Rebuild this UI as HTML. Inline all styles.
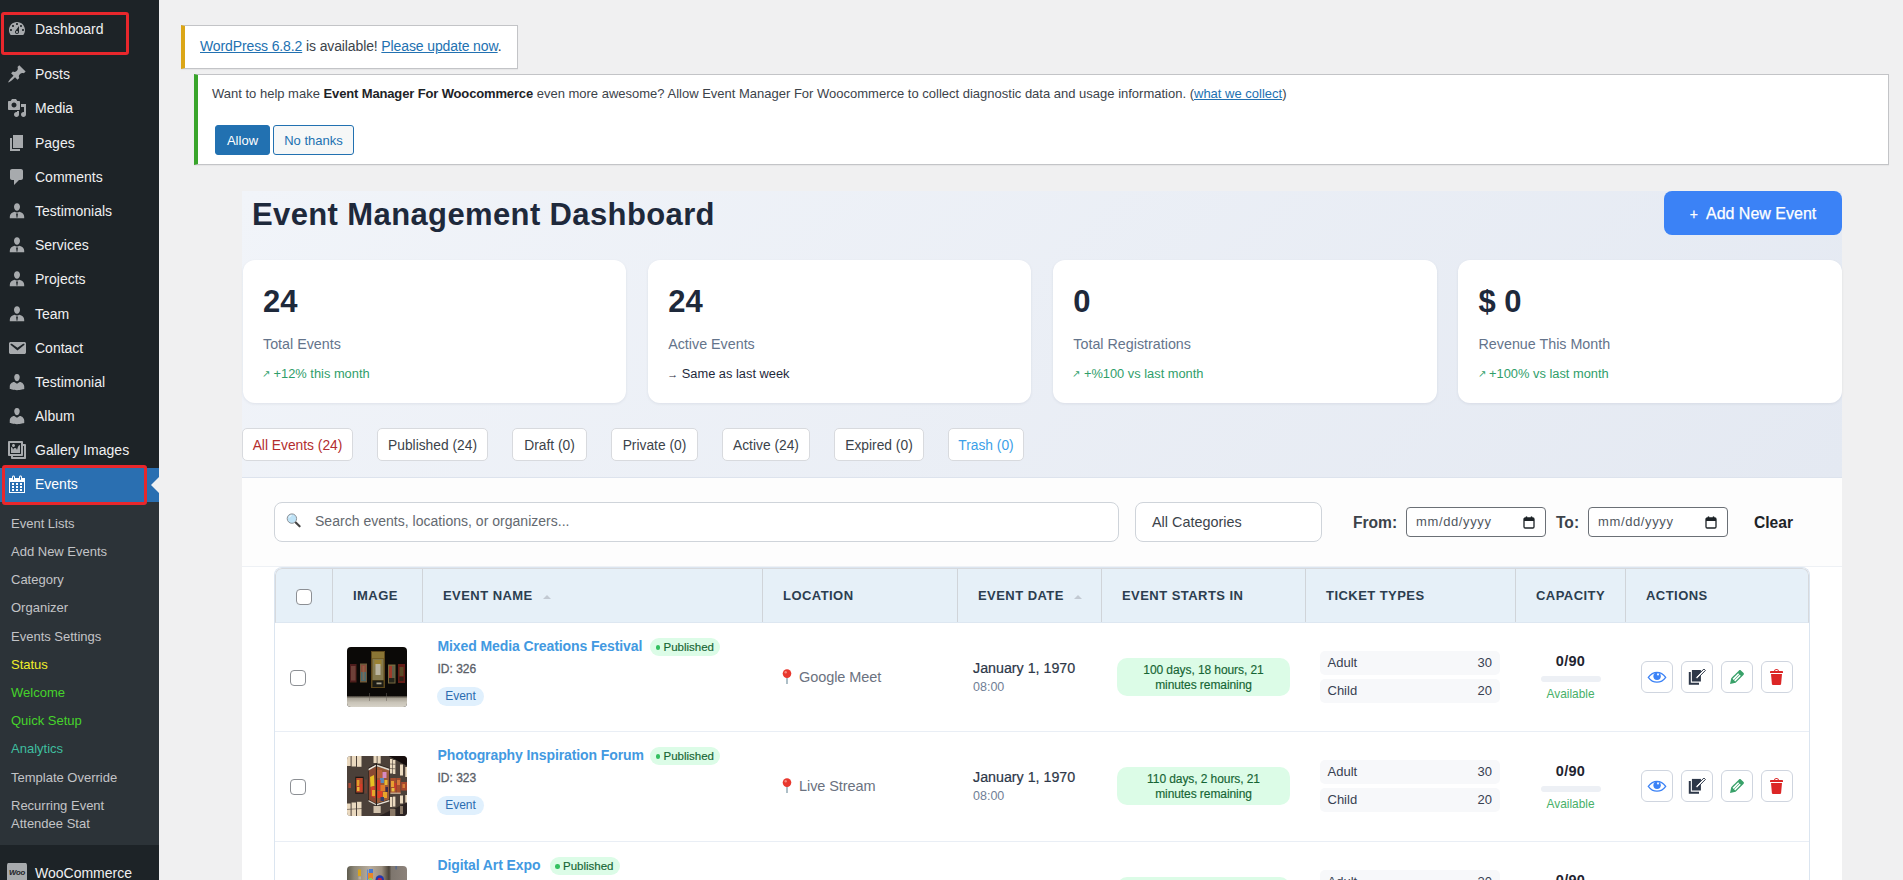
<!DOCTYPE html>
<html lang="en">
<head>
<meta charset="utf-8">
<title>Event Management Dashboard</title>
<style>
*{box-sizing:border-box;}
html,body{margin:0;padding:0;}
html{overflow:hidden;width:1903px;height:880px;}
body{width:1903px;height:880px;overflow:hidden;background:#f0f0f1;font-family:"Liberation Sans",sans-serif;font-size:13px;color:#3c434a;position:relative;}
a{color:#2271b1;text-decoration:underline;}
/* ---------- sidebar ---------- */
#menu{position:absolute;left:0;top:0;width:159px;height:880px;background:#1d2327;}
#menu .it{position:absolute;left:0;width:159px;height:34px;color:#f0f0f1;font-size:14px;line-height:34px;padding-left:35px;white-space:nowrap;}
#menu .it svg{position:absolute;left:7px;top:7px;width:20px;height:20px;fill:#a7aaad;}
#menu .it.cur{background:#2a6fb1;color:#fff;line-height:32px;}
#menu .it.cur svg{fill:#fff;top:6px;}
#menu .it.cur:after{content:"";position:absolute;right:0;top:9px;border:8px solid transparent;border-right-color:#f0f0f1;}
#sub{position:absolute;left:0;top:501.800px;width:159px;height:343.400px;background:#2c3338;}
#sub div{position:absolute;left:11px;margin-top:1px;font-size:13px;line-height:18px;color:#c3c4c7;white-space:nowrap;}
.redbox{position:absolute;border:3px solid #e8272c;border-radius:3px;}
/* ---------- notices ---------- */
#nag{position:absolute;left:181px;top:25px;width:337px;height:44px;background:#fff;border:1px solid #c3c4c7;border-left:4px solid #dba617;box-shadow:0 1px 1px rgba(0,0,0,.04);font-size:14px;line-height:19px;padding:11px 0 0 15px;white-space:nowrap;color:#3c434a;letter-spacing:-.12px;}
#notice{position:absolute;left:194px;top:74px;width:1695px;height:91px;background:#fff;border:1px solid #c3c4c7;border-left:4px solid #39a52b;box-shadow:0 1px 1px rgba(0,0,0,.04);}
#notice p{position:absolute;left:14px;top:9px;margin:0;font-size:13px;line-height:19px;white-space:nowrap;color:#3c434a;}
#notice b{color:#1d2327;letter-spacing:-.14px;}
.btn{position:absolute;top:50px;height:30px;border-radius:3px;font-size:13px;line-height:29px;text-align:center;border:1px solid #2271b1;}
.btn.p{left:17px;width:55px;background:#2271b1;color:#fff;}
.btn.s{left:75px;width:81px;background:#f6f7f7;color:#2271b1;}
/* ---------- panel ---------- */
#panel{position:absolute;left:242px;top:191px;width:1600px;height:287px;border-bottom:1px solid #dde3ed;background:linear-gradient(135deg,#f1f4f9 0%,#e4e9f2 100%);}
#title{position:absolute;left:10px;top:6px;margin:0;font-size:31px;letter-spacing:.38px;line-height:36px;font-weight:bold;color:#1e293b;white-space:nowrap;}
#addnew{-webkit-text-stroke:.25px #fff;position:absolute;left:1422px;top:0;width:178px;height:44px;border-radius:8px;background:#3b82f6;color:#fff;font-size:16px;line-height:46px;text-align:center;white-space:nowrap;}
.card{position:absolute;top:68.800px;width:383.700px;height:143.400px;background:#fff;border-radius:12px;box-shadow:0 1px 3px rgba(30,41,59,.08);}
.card .n{position:absolute;left:20.500px;top:24px;font-size:31px;line-height:36px;font-weight:bold;color:#1e293b;}
.card .l{position:absolute;left:20.500px;top:75px;font-size:14.300px;line-height:18px;color:#64748b;}
.card .t{position:absolute;left:19.500px;top:106px;font-size:12.850px;line-height:16px;color:#2f9e6a;white-space:nowrap;}
.card .ar{font-size:9.500px;display:inline-block;width:8px;vertical-align:1px;}
.card .t.k .ar{font-size:11px;width:11px;vertical-align:0;}
.card .t.k{color:#1e293b;}
.tab{position:absolute;top:237px;height:33px;background:#fff;border:1px solid #d8dade;border-radius:5px;font-size:13.800px;line-height:33px;text-align:center;color:#3c434a;white-space:nowrap;}
/* ---------- filters ---------- */
#filters{position:absolute;left:242px;top:478px;width:1600px;height:89px;background:#fdfdfd;border-bottom:1px solid #eef1f5;}
#search{position:absolute;left:32px;top:24px;width:845px;height:40px;border:1px solid #cfd4da;border-radius:8px;background:#fff;font-size:14px;line-height:36px;color:#646970;padding-left:40px;letter-spacing:.02px;}
#cat{position:absolute;left:893px;top:24px;width:187px;height:40px;border:1px solid #cfd4da;border-radius:8px;background:#fff;font-size:14.400px;line-height:38px;color:#3c434a;padding-left:16px;}
.flab{position:absolute;top:33px;font-size:15.600px;line-height:24px;font-weight:bold;color:#3c434a;}
.date{position:absolute;top:29px;width:140px;height:30px;border:1px solid #6b7076;border-radius:4px;background:#fff;font-size:13px;letter-spacing:.62px;line-height:28px;color:#50575e;padding-left:9px;}
.date svg{position:absolute;left:116px;top:8px;width:12px;height:13px;}
/* ---------- table ---------- */
#below{position:absolute;left:242px;top:567px;width:1600px;height:313px;background:#fff;}
#tbl{position:absolute;left:274px;top:567px;width:1536px;height:320px;border:1px solid #dbe5f0;border-bottom:0;border-radius:8px 8px 0 0;overflow:hidden;background:#fff;}
#thead{position:absolute;left:0;top:0;width:1534px;height:55px;background:#e6f0f8;border:1px solid #d6d9dd;border-bottom:1px solid #dde7f1;border-radius:7px 7px 0 0;}
.th{position:absolute;top:0;height:53px;border-left:1px solid #d0d4d9;font-size:13px;line-height:54px;font-weight:bold;letter-spacing:.45px;color:#2c3e50;white-space:nowrap;}
.row{position:absolute;left:0;width:100%;height:109px;border-bottom:1px solid #e9eef5;}
.cb{position:absolute;width:16px;height:16px;border:1px solid #8c8f94;border-radius:4px;background:#fff;}

.th span{margin-left:20px;}
.srt{display:inline-block;margin-left:10px;border:4px solid transparent;border-top:0;border-bottom:4px solid #c2c9d2;vertical-align:1px;}
.thumb{position:absolute;left:72px;width:60px;height:60px;border-radius:4px;}
.ttl{position:absolute;left:162.500px;top:13px;font-size:14px;letter-spacing:-.1px;line-height:20px;font-weight:bold;color:#4299e1;white-space:nowrap;overflow:visible;}
.pub{-webkit-text-stroke:.15px #166534;position:absolute;top:15px;width:70px;height:18px;border-radius:9px;background:#dcfce7;color:#166534;font-size:11.500px;line-height:18px;padding-left:13.500px;white-space:nowrap;}
.pub i{position:absolute;left:5.500px;top:7px;width:4.500px;height:4.500px;border-radius:50%;background:#34c060;}
.pid{position:absolute;left:162.500px;top:38px;font-size:12px;line-height:16px;color:#5a6068;-webkit-text-stroke:.3px #5a6068;}
.ev{position:absolute;left:162px;top:64px;width:47px;height:19px;border-radius:10px;background:#e0f0fd;color:#2b6cb0;font-size:12px;line-height:19px;text-align:center;}
.loc{position:absolute;left:507px;top:45px;height:18px;white-space:nowrap;font-size:14.500px;letter-spacing:-.08px;line-height:18px;color:#6b7280;}
.loc svg{position:absolute;left:0;top:0;}
.loc span{position:absolute;left:17px;top:0;}
.dt{-webkit-text-stroke:.2px #2d3748;position:absolute;left:698px;top:36px;font-size:14.250px;line-height:18px;color:#2d3748;white-space:nowrap;}
.tm{position:absolute;left:698px;top:56px;font-size:12.500px;line-height:16px;color:#718096;}
.cd{-webkit-text-stroke:.15px #166534;position:absolute;left:842px;top:35px;width:173px;height:38px;border-radius:10px;background:#dcfce7;color:#166534;font-size:12px;letter-spacing:-.08px;line-height:15px;text-align:center;padding-top:5px;}
.tk{position:absolute;left:1044.500px;width:180.500px;height:23.500px;border-radius:5px;background:#f7f8fa;font-size:13px;line-height:24px;color:#374151;}
.tk span{position:absolute;left:8px;}
.tk b{position:absolute;right:8px;font-weight:normal;}
.cap{position:absolute;left:1240.500px;top:29px;width:110px;text-align:center;font-size:14.500px;letter-spacing:.3px;line-height:18px;font-weight:bold;color:#1f2430;}
.bar{position:absolute;left:1266px;top:53px;width:60px;height:6px;border-radius:3px;background:#edf0f5;}
.av{position:absolute;left:1240.500px;top:63px;width:110px;text-align:center;font-size:11.900px;line-height:16px;color:#48b068;}
.ab{position:absolute;top:38px;width:32px;height:32px;border:1px solid #cfd5df;border-radius:6px;background:#fff;}
.ab svg{position:absolute;}
.r2 .cap,.r2 .bar,.r2 .av{margin-top:1px;}
</style>
</head>
<body>
<div id="menu">
<div class="it" style="top:12.0px"><svg viewBox="0 0 20 20"><path d="M3.76 16h12.48c1.1-1.37 1.76-3.11 1.76-5 0-4.42-3.58-8-8-8s-8 3.58-8 8c0 1.89.66 3.63 1.76 5zM10 4c.55 0 1 .45 1 1s-.45 1-1 1-1-.45-1-1 .45-1 1-1zM6 6c.55 0 1 .45 1 1s-.45 1-1 1-1-.45-1-1 .45-1 1-1zm8 0c.55 0 1 .45 1 1s-.45 1-1 1-1-.45-1-1 .45-1 1-1zm-5.37 5.55L12 7v6c0 1.1-.9 2-2 2s-2-.9-2-2c0-.57.24-1.08.63-1.45zM4 10c.55 0 1 .45 1 1s-.45 1-1 1-1-.45-1-1 .45-1 1-1zm12 0c.55 0 1 .45 1 1s-.45 1-1 1-1-.45-1-1 .45-1 1-1zm-5 3c0-.55-.45-1-1-1s-1 .45-1 1 .45 1 1 1 1-.45 1-1z"/></svg>Dashboard</div>
<div class="it" style="top:57.2px"><svg viewBox="0 0 20 20"><path d="M10.44 3.02l1.82-1.82 6.36 6.35-1.83 1.82c-1.05-.68-2.48-.57-3.41.36l-.75.75c-.92.93-1.04 2.35-.35 3.41l-1.83 1.82-2.41-2.41-2.8 2.79c-.42.42-3.38 2.71-3.8 2.29s1.86-3.39 2.28-3.81l2.79-2.79L4.1 9.36l1.83-1.82c1.05.69 2.48.57 3.4-.36l.75-.75c.93-.92 1.05-2.35.36-3.41z"/></svg>Posts</div>
<div class="it" style="top:91.4px"><svg viewBox="0 0 20 20"><path d="M13 11V4c0-.55-.45-1-1-1h-1.67L9 1H5L3.67 3H2c-.55 0-1 .45-1 1v7c0 .55.45 1 1 1h10c.55 0 1-.45 1-1zM7 4.5c1.38 0 2.5 1.12 2.5 2.5S8.38 9.5 7 9.5 4.5 8.38 4.5 7 5.62 4.5 7 4.5zM14 6h5v10.5c0 1.38-1.12 2.5-2.5 2.5S14 17.88 14 16.5s1.12-2.5 2.5-2.5c.17 0 .34.02.5.05V9h-3V6zm-4 8.05V13h2v3.5c0 1.38-1.12 2.5-2.5 2.5S7 17.88 7 16.5 8.12 14 9.5 14c.17 0 .34.02.5.05z"/></svg>Media</div>
<div class="it" style="top:125.6px"><svg viewBox="0 0 20 20"><path d="M6 15V2h10v13H6zm-1 1h8v2H3V5h2v11z"/></svg>Pages</div>
<div class="it" style="top:159.8px"><svg viewBox="0 0 20 20"><path d="M5 2h9c1.1 0 2 .9 2 2v7c0 1.1-.9 2-2 2h-2l-5 5v-5H5c-1.1 0-2-.9-2-2V4c0-1.1.9-2 2-2z"/></svg>Comments</div>
<div class="it" style="top:194.0px"><svg viewBox="0 0 20 20"><path d="M10 2.2c1.8 0 3 1.5 3 3.6 0 2.2-1.3 4-3 4s-3-1.800-3-4c0-2.100 1.200-3.600 3-3.600zM7.600 10.700c.7.500 1.500.800 2.400.800s1.700-.300 2.400-.800c2.900.700 4.800 2.500 4.800 5v1.500H2.800v-1.500c0-2.500 1.900-4.300 4.800-5zM10 12.100l-.9 1 .5 3.400.4.600.4-.600.5-3.400z" fill-rule="evenodd"/></svg>Testimonials</div>
<div class="it" style="top:228.2px"><svg viewBox="0 0 20 20"><path d="M10 2.2c1.8 0 3 1.5 3 3.6 0 2.2-1.3 4-3 4s-3-1.800-3-4c0-2.100 1.200-3.600 3-3.600zM7.600 10.700c.7.500 1.500.800 2.400.800s1.700-.300 2.400-.800c2.900.700 4.800 2.500 4.800 5v1.500H2.800v-1.500c0-2.500 1.900-4.300 4.800-5zM10 12.100l-.9 1 .5 3.400.4.600.4-.600.5-3.400z" fill-rule="evenodd"/></svg>Services</div>
<div class="it" style="top:262.4px"><svg viewBox="0 0 20 20"><path d="M10 2.2c1.8 0 3 1.5 3 3.6 0 2.2-1.3 4-3 4s-3-1.800-3-4c0-2.100 1.200-3.600 3-3.600zM7.600 10.700c.7.500 1.500.800 2.400.800s1.700-.300 2.400-.800c2.900.700 4.800 2.500 4.800 5v1.500H2.800v-1.500c0-2.500 1.900-4.300 4.800-5zM10 12.100l-.9 1 .5 3.400.4.600.4-.600.5-3.400z" fill-rule="evenodd"/></svg>Projects</div>
<div class="it" style="top:296.6px"><svg viewBox="0 0 20 20"><path d="M10 2.2c1.8 0 3 1.5 3 3.6 0 2.2-1.3 4-3 4s-3-1.800-3-4c0-2.100 1.200-3.600 3-3.600zM7.600 10.700c.7.500 1.500.800 2.400.800s1.700-.300 2.400-.800c2.900.700 4.800 2.500 4.800 5v1.500H2.800v-1.500c0-2.500 1.900-4.300 4.800-5zM10 12.100l-.9 1 .5 3.400.4.600.4-.600.5-3.400z" fill-rule="evenodd"/></svg>Team</div>
<div class="it" style="top:330.8px"><svg viewBox="0 0 20 20"><path d="M3.870 4h13.250C18.370 4 19 4.590 19 5.790v8.420c0 1.190-.630 1.790-1.880 1.790H3.870c-1.250 0-1.880-.600-1.880-1.790V5.790c0-1.200.630-1.790 1.880-1.790zm6.620 8.600l6.740-5.530c.240-.200.430-.660.130-1.070-.290-.410-.820-.420-1.170-.170l-5.700 3.860L4.800 5.830c-.350-.250-.880-.240-1.170.170-.300.410-.110.870.130 1.070z"/></svg>Contact</div>
<div class="it" style="top:365.0px"><svg viewBox="0 0 20 20"><path d="M10 9.250c-2.270 0-2.730-3.440-2.730-3.440C7 4.020 7.820 2 9.970 2c2.160 0 2.980 2.020 2.710 3.810 0 0-.410 3.440-2.680 3.440zm0 2.570L12.720 10c2.390 0 4.520 2.330 4.520 4.530v2.490s-3.650 1.130-7.240 1.130c-3.650 0-7.240-1.130-7.240-1.130v-2.490c0-2.250 1.940-4.480 4.470-4.480z"/></svg>Testimonial</div>
<div class="it" style="top:399.2px"><svg viewBox="0 0 20 20"><path d="M10 9.250c-2.270 0-2.730-3.440-2.730-3.440C7 4.020 7.820 2 9.970 2c2.160 0 2.980 2.020 2.710 3.810 0 0-.410 3.440-2.680 3.440zm0 2.570L12.720 10c2.390 0 4.520 2.330 4.520 4.530v2.490s-3.650 1.130-7.240 1.130c-3.650 0-7.240-1.130-7.240-1.130v-2.490c0-2.250 1.940-4.480 4.470-4.480z"/></svg>Album</div>
<div class="it" style="top:433.4px"><svg viewBox="0 0 20 20"><path d="M16 4h1.960c.57 0 1.040.47 1.040 1.040v12.920c0 .57-.47 1.040-1.040 1.040H5.040C4.470 19 4 18.530 4 17.960V16H2.040C1.470 16 1 15.530 1 14.960V2.040C1 1.470 1.470 1 2.040 1h12.920c.57 0 1.040.47 1.040 1.040V4zM3 14h11V3H3v11zm5-8.500C8 4.670 7.330 4 6.500 4S5 4.670 5 5.500 5.670 7 6.500 7 8 6.330 8 5.500zm2 4.500s1-5 3-5v8H4V7c2 0 2 3 2 3s.33-2 2-2 2 2 2 2zm7 7V6h-1v8.960c0 .57-.47 1.040-1.040 1.040H6v1h11z"/></svg>Gallery Images</div>
<div class="it cur" style="top:467.6px"><svg viewBox="0 0 20 20"><path d="M15 4h3v15H2V4h3V3c0-.410.150-.760.440-1.060.290-.290.650-.440 1.060-.440s.770.150 1.060.440c.290.300.440.650.440 1.060v1h4V3c0-.410.150-.760.440-1.060.290-.290.650-.440 1.060-.440s.770.150 1.060.440c.290.300.440.650.440 1.060v1zM6 3v2.500c0 .140.050.260.150.360.090.090.210.140.350.140s.260-.050.350-.140c.100-.100.150-.220.150-.360V3c0-.140-.050-.260-.150-.350-.090-.100-.210-.150-.350-.150s-.260.050-.350.150c-.100.090-.150.210-.150.350zm7 0v2.500c0 .140.050.260.140.360.100.090.220.140.360.140s.260-.050.360-.140c.090-.100.140-.220.140-.360V3c0-.140-.050-.260-.140-.350-.100-.100-.220-.150-.360-.150s-.260.050-.360.150c-.090.090-.140.210-.140.350zm4 15V8H3v10h14zM7 9v2H5V9h2zm2 0h2v2H9V9zm4 2V9h2v2h-2zm-6 1v2H5v-2h2zm2 0h2v2H9v-2zm4 2v-2h2v2h-2zm-6 1v2H5v-2h2zm4 2H9v-2h2v2zm4 0h-2v-2h2v2z"/></svg>Events</div>
<div id="sub">
<div style="top:12.0px">Event Lists</div>
<div style="top:40.2px">Add New Events</div>
<div style="top:68.4px">Category</div>
<div style="top:96.6px">Organizer</div>
<div style="top:124.8px">Events Settings</div>
<div style="top:153.0px;color:#f1ee2a">Status</div>
<div style="top:181.2px;color:#46d32b">Welcome</div>
<div style="top:209.4px;color:#46d32b">Quick Setup</div>
<div style="top:237.6px;color:#3fbf9f">Analytics</div>
<div style="top:265.8px">Template Override</div>
<div style="top:294.0px">Recurring Event<br>Attendee Stat</div>
</div>
<div class="it" style="top:856.2px"><svg viewBox="0 0 20 20"><rect x="0" y="-.3" width="20" height="20" rx="2.600" fill="#a7aaad"/><text x="10" y="11.500" font-size="7.800" letter-spacing="-.3" font-weight="bold" text-anchor="middle" fill="#1d2327" font-family="Liberation Sans, sans-serif" font-style="italic">Woo</text></svg>WooCommerce</div>
<div class="redbox" style="left:1px;top:12px;width:127.5px;height:43px"></div>
<div class="redbox" style="left:2px;top:465px;width:144.5px;height:39.5px"></div>
</div>

<div id="nag"><a>WordPress 6.8.2</a> is available! <a>Please update now</a>.</div>
<div id="notice">
<p>Want to help make <b>Event Manager For Woocommerce</b> even more awesome? Allow Event Manager For Woocommerce to collect diagnostic data and usage information. (<a>what we collect</a>)</p>
<div class="btn p">Allow</div><div class="btn s">No thanks</div>
</div>
<div id="panel">
<h1 id="title">Event Management Dashboard</h1>
<div id="addnew"><span style="font-size:14px;margin-right:8px">+</span>Add New Event</div>
<div class="card" style="left:0.50px"><div class="n">24</div><div class="l">Total Events</div><div class="t"><span class="ar">&#8599;</span> +12% this month</div></div>
<div class="card" style="left:405.67px"><div class="n">24</div><div class="l">Active Events</div><div class="t k"><span class="ar">&#8594;</span> Same as last week</div></div>
<div class="card" style="left:810.84px"><div class="n">0</div><div class="l">Total Registrations</div><div class="t"><span class="ar">&#8599;</span> +%100 vs last month</div></div>
<div class="card" style="left:1216.01px"><div class="n">$ 0</div><div class="l">Revenue This Month</div><div class="t"><span class="ar">&#8599;</span> +100% vs last month</div></div>
<div class="tab" style="left:0;width:111px;color:#b32d2e">All Events (24)</div>
<div class="tab" style="left:135px;width:111px">Published (24)</div>
<div class="tab" style="left:270px;width:75px">Draft (0)</div>
<div class="tab" style="left:369px;width:87px">Private (0)</div>
<div class="tab" style="left:480px;width:88px">Active (24)</div>
<div class="tab" style="left:592px;width:90px">Expired (0)</div>
<div class="tab" style="left:706px;width:76px;color:#3b9fe8">Trash (0)</div>
</div>
<div id="filters">
<div id="search"><svg viewBox="0 0 16 16" style="position:absolute;left:10px;top:9px;width:16px;height:16px"><line x1="10.500" y1="10.200" x2="14.600" y2="14.300" stroke="#444" stroke-width="2.100" stroke-linecap="round"/><circle cx="6.900" cy="6.600" r="4.700" fill="#bfe3f7" stroke="#8d9196" stroke-width="1"/><path d="M4.200 5.600a3 3 0 0 1 2.300-2.100" stroke="#fff" stroke-width=".9" fill="none"/></svg>Search events, locations, or organizers...</div>
<div id="cat">All Categories</div>
<div class="flab" style="left:1111px">From:</div>
<div class="date" style="left:1164px">mm/dd/yyyy<svg viewBox="0 0 12 13"><rect x="1" y="2" width="10" height="10" rx="1.200" fill="none" stroke="#1d2327" stroke-width="1.300"/><rect x="1" y="2" width="10" height="3" fill="#1d2327"/><rect x="2.800" y=".4" width="1.400" height="2.400" fill="#1d2327"/><rect x="7.800" y=".4" width="1.400" height="2.400" fill="#1d2327"/></svg></div>
<div class="flab" style="left:1314px">To:</div>
<div class="date" style="left:1346px">mm/dd/yyyy<svg viewBox="0 0 12 13"><rect x="1" y="2" width="10" height="10" rx="1.200" fill="none" stroke="#1d2327" stroke-width="1.300"/><rect x="1" y="2" width="10" height="3" fill="#1d2327"/><rect x="2.800" y=".4" width="1.400" height="2.400" fill="#1d2327"/><rect x="7.800" y=".4" width="1.400" height="2.400" fill="#1d2327"/></svg></div>
<div class="flab" style="left:1512px;color:#1d2327">Clear</div>
</div>
<div id="below"></div>
<div id="tbl">
<div id="thead">
<div class="th" style="left:56px"><span>IMAGE</span></div>
<div class="th" style="left:146px"><span>EVENT NAME</span><i class="srt"></i></div>
<div class="th" style="left:486px"><span>LOCATION</span></div>
<div class="th" style="left:681px"><span>EVENT DATE</span><i class="srt"></i></div>
<div class="th" style="left:825px"><span>EVENT STARTS IN</span></div>
<div class="th" style="left:1029px"><span>TICKET TYPES</span></div>
<div class="th" style="left:1239px"><span>CAPACITY</span></div>
<div class="th" style="left:1349px"><span>ACTIONS</span></div>
<div class="cb" style="left:20px;top:20px"></div>
</div>
<div class="row" style="top:55px">
<div class="cb" style="left:15px;top:47px"></div>
<svg class="thumb" style="top:24px" viewBox="0 0 60 60"><defs><filter id="bl1" x="-5%" y="-5%" width="110%" height="110%"><feGaussianBlur stdDeviation=".45"/></filter><linearGradient id="fl1" x1="0" y1="0" x2="0" y2="1"><stop offset="0" stop-color="#3a352d"/><stop offset=".18" stop-color="#a9a396"/><stop offset=".5" stop-color="#c9c4b8"/><stop offset="1" stop-color="#dcd8ce"/></linearGradient></defs><rect width="60" height="60" fill="#0b0907"/><g filter="url(#bl1)"><rect x="-2" y="49" width="64" height="13" fill="url(#fl1)"/>
<rect x="22.300" y="46" width=".5" height="8" fill="#6a655c"/><rect x="39.300" y="46" width=".5" height="8" fill="#6a655c"/>
<rect x="3" y="17" width="6.500" height="18.500" fill="#4e1f1b"/><rect x="4" y="19" width="4.500" height="14.500" fill="#6e4138"/>
<rect x="13" y="16.500" width="7" height="19" fill="#6f5a3a"/><rect x="14" y="18" width="5" height="7" fill="#8a4a3a"/><rect x="14" y="25" width="5" height="9" fill="#4a6a70"/><rect x="15.500" y="19" width="2" height="14" fill="#9a6a4a" opacity=".6"/>
<rect x="24" y="4" width="14" height="37" fill="#5e4a1c"/><rect x="25" y="5" width="12" height="6.500" fill="#8a7434"/><rect x="25.500" y="12" width="11" height="21" fill="#857a50"/><rect x="27.500" y="13" width="7" height="6" fill="#9a8230"/><rect x="28.500" y="17" width="5" height="11" fill="#b9b4a0"/><rect x="25.500" y="33.500" width="11" height="6.500" fill="#1e1a12"/><rect x="29.500" y="35.500" width="5" height="1.800" fill="#a8a28c"/>
<rect x="41" y="17.500" width="7.500" height="19" fill="#78683c"/><rect x="42" y="19" width="3" height="12" fill="#a03a2a"/><rect x="45" y="19" width="2.500" height="12" fill="#5e5e4a"/><rect x="42" y="31" width="5.500" height="4.500" fill="#25251e"/>
<rect x="51" y="17" width="7" height="19" fill="#641a17"/><rect x="52.500" y="20" width="4" height="9" fill="#5a4c26"/><rect x="52.500" y="30" width="4" height="4" fill="#2e2216"/></g></svg>
<div class="ttl" style="width:205px">Mixed Media Creations Festival</div><div class="pub" style="left:375px"><i></i>Published</div>
<div class="pid">ID: 326</div><div class="ev">Event</div>
<div class="loc"><svg viewBox="0 0 10 16" width="10" height="16"><line x1="5" y1="9" x2="5" y2="16" stroke="#6b8a9a" stroke-width="1.100"/><circle cx="5" cy="5.600" r="4.300" fill="#e8382e"/><circle cx="3.700" cy="4.200" r="1.200" fill="#f58a7e"/></svg><span>Google Meet</span></div>
<div class="dt">January 1, 1970</div><div class="tm">08:00</div>
<div class="cd">100 days, 18 hours, 21<br>minutes remaining</div>
<div class="tk" style="top:28px"><span>Adult</span><b>30</b></div><div class="tk" style="top:56px"><span>Child</span><b>20</b></div>
<div class="cap">0/90</div><div class="bar"></div><div class="av">Available</div>
<div class="ab" style="left:1366px"><svg viewBox="0 0 32 32" style="left:-1px;top:-1px;width:32px;height:32px"><path d="M7.300 16.300C10 12.600 12.900 11.300 16 11.300s6 1.300 8.700 5c-2.700 3.700-5.600 4.900-8.700 4.900s-6-1.200-8.700-4.900z" fill="#fff" stroke="#3b82f6" stroke-width="1.300"/><circle cx="16.100" cy="15.300" r="3.700" fill="#3b82f6"/><circle cx="17" cy="13.400" r="1.100" fill="#eaf2ff"/></svg></div><div class="ab" style="left:1406px"><svg viewBox="0 0 32 32" style="left:-1px;top:-1px;width:32px;height:32px"><path d="M7.800 11.100h2v10.700h8.200v2H7.800z" fill="#2d3748"/><path d="M10.900 8.900h9v11.600h-9z" fill="#2d3748"/><path d="M15 15.900l7.900-7.900 1.500 1.500-7.900 7.900-2.100.6z" fill="#fff" stroke="#2d3748" stroke-width="1"/></svg></div><div class="ab" style="left:1446px"><svg viewBox="0 0 20 20" style="left:5px;top:5px;width:20px;height:20px" fill="#38a169"><path d="M13.890 3.390l2.710 2.720c.46.460.42 1.240.030 1.640l-8.010 8.020-5.560 1.160 1.160-5.580s7.600-7.630 7.990-8.030c.39-.39 1.220-.39 1.680.070zm-2.730 2.790l-5.590 5.610 1.110 1.110 5.540-5.650zm-2.970 8.230l5.580-5.600-1.070-1.080-5.590 5.600z"/></svg></div><div class="ab" style="left:1486px"><svg viewBox="0 0 20 20" style="left:5px;top:5px;width:20px;height:20px" fill="#dc2626"><path d="M12 4h3c.6 0 1 .4 1 1v1H3V5c0-.6.500-1 1-1h3c.2-1.100 1.300-2 2.500-2s2.300.9 2.500 2zM8 4h3c-.2-.6-.9-1-1.500-1S8.200 3.400 8 4zM4 7h11l-.9 10.100c0 .5-.5.900-1 .900H5.900c-.5 0-.9-.4-1-.9L4 7z"/></svg></div>
</div>
<div class="row r2" style="top:164px;height:110px">
<div class="cb" style="left:15px;top:47px"></div>
<svg class="thumb" style="top:24px" viewBox="0 0 60 60"><defs><filter id="bl2" x="-5%" y="-5%" width="110%" height="110%"><feGaussianBlur stdDeviation=".55"/></filter></defs><rect width="60" height="60" fill="#4b4039"/><g filter="url(#bl2)">
<polygon points="40,-1 61,-1 61,10.500" fill="#120e0c"/><polygon points="30,61 61,46 61,61" fill="#2a2320"/>
<g fill="#ead9bf"><rect x="-1" y="-1" width="4.600" height="11"/><rect x="4.600" y="-1" width="4.400" height="11.500"/><rect x="10" y="-1" width="4.500" height="11.800"/>
<rect x="26.500" y="-1" width="3.200" height="8"/><rect x="30.500" y="-1" width="3.200" height="8.500"/>
<rect x="43" y="3" width="2.400" height="14.500"/><rect x="46" y="4" width="2.400" height="14"/><rect x="53" y="8.500" width="3" height="11"/><rect x="58.300" y="11" width="2.500" height="10"/>
<rect x="-1" y="47.500" width="4.600" height="14"/><rect x="4.600" y="46.500" width="4.400" height="15"/><rect x="10" y="45.800" width="4.500" height="15"/>
<rect x="26.500" y="50" width="7.200" height="7" opacity=".85"/>
<rect x="43" y="41" width="2.400" height="10"/><rect x="46" y="40.600" width="2.400" height="10"/><rect x="53" y="39.500" width="3" height="8"/><rect x="58.300" y="39" width="2.500" height="7.500"/></g>
<g fill="#8a7866"><rect x="43" y="53" width="5.400" height="7"/><rect x="53" y="50" width="3" height="8"/></g>
<g stroke="#4b4039" stroke-width=".6"><line x1="43" y1="8" x2="48.500" y2="8.300"/><line x1="43" y1="12.500" x2="48.500" y2="12.800"/><line x1="-1" y1="53.500" x2="15" y2="52.500"/></g>
<rect x="1.400" y="27" width="2.500" height="5" fill="#a84a34"/>
<rect x="8.300" y="20.800" width="8.400" height="17" fill="#1e1916"/><rect x="9.200" y="22" width="6.600" height="14.500" fill="#b8482c"/><rect x="9.800" y="24" width="2.600" height="6" fill="#e0a02c"/><rect x="12.500" y="28" width="2.800" height="6" fill="#d23c2a"/><rect x="10" y="31" width="2.500" height="4" fill="#e8b838"/>
<rect x="17.600" y="23.500" width="2.400" height="14" fill="#6a4236"/>
<polygon points="21,12 29.200,7.400 42.600,12 42.600,45.300 29.200,49.900 21,45.300" fill="#2a211d"/>
<polygon points="21.800,14 29,10.500 29,47.500 21.800,43.500" fill="#8a4a30"/><polygon points="29.600,10.500 42,14 42,43.500 29.600,47.500" fill="#9a5a38"/>
<polygon points="23,21 27,19 27.500,30 23.500,31" fill="#e8c024"/><polygon points="23.500,31 27.500,30 28,42 24,40" fill="#d8402a"/><rect x="25" y="34" width="3" height="6" fill="#e6a82a"/>
<rect x="30" y="14" width="5" height="8" fill="#b8643a"/><rect x="35.500" y="16" width="4" height="6" fill="#d88ac0"/><rect x="33" y="22" width="4" height="5" fill="#5a8ab8"/><rect x="37.500" y="24" width="3" height="5" fill="#e8b830"/>
<rect x="30" y="24" width="3.500" height="10" fill="#d8342a"/><rect x="33.500" y="29" width="4.500" height="6" fill="#e07a2a"/><rect x="30.500" y="35" width="5" height="7" fill="#e23c28"/><rect x="36" y="36" width="4" height="6" fill="#e8a42c"/><rect x="33.500" y="41" width="3.500" height="4" fill="#34406a"/><rect x="38.500" y="31" width="2.500" height="5" fill="#3a2a4a"/>
<polygon points="21.500,12.800 29.200,8.400 29.200,10.200 21.500,14.600" fill="#efe8dc"/><polygon points="29.600,8.400 42.300,12.800 42.300,14.600 29.600,10.200" fill="#e0d8cc"/>
<polygon points="21.500,44 29.200,48 29.200,49.600 21.500,45.600" fill="#d8d0c4"/><polygon points="29.600,48 42.300,44 42.300,45.600 29.600,49.600" fill="#e8e0d4"/>
<line x1="29.400" y1="7.400" x2="29.400" y2="50" stroke="#1a1512" stroke-width=".9"/>
<rect x="43.400" y="22" width="10.200" height="15.600" fill="#a8502e"/><rect x="44" y="25" width="3" height="6" fill="#e8a030"/><rect x="47.500" y="27" width="2.500" height="7" fill="#d8382a"/><rect x="50" y="24" width="3" height="5" fill="#d87a3a"/><rect x="44.500" y="32" width="3" height="3.500" fill="#e8c040"/><line x1="49.300" y1="22" x2="49.300" y2="37.600" stroke="#5a4036" stroke-width=".5"/><rect x="43.400" y="36.600" width="10.200" height="1.200" fill="#c8b8a0"/>
<rect x="54.200" y="26" width="6.800" height="8.500" fill="#a8482e"/><rect x="55.500" y="28" width="2.500" height="4" fill="#d8803a"/></g></svg>
<div class="ttl" style="width:205px">Photography Inspiration Forum</div><div class="pub" style="left:375px"><i></i>Published</div>
<div class="pid">ID: 323</div><div class="ev">Event</div>
<div class="loc"><svg viewBox="0 0 10 16" width="10" height="16"><line x1="5" y1="9" x2="5" y2="16" stroke="#6b8a9a" stroke-width="1.100"/><circle cx="5" cy="5.600" r="4.300" fill="#e8382e"/><circle cx="3.700" cy="4.200" r="1.200" fill="#f58a7e"/></svg><span>Live Stream</span></div>
<div class="dt">January 1, 1970</div><div class="tm">08:00</div>
<div class="cd">110 days, 2 hours, 21<br>minutes remaining</div>
<div class="tk" style="top:28px"><span>Adult</span><b>30</b></div><div class="tk" style="top:56px"><span>Child</span><b>20</b></div>
<div class="cap">0/90</div><div class="bar"></div><div class="av">Available</div>
<div class="ab" style="left:1366px"><svg viewBox="0 0 32 32" style="left:-1px;top:-1px;width:32px;height:32px"><path d="M7.300 16.300C10 12.600 12.900 11.300 16 11.300s6 1.300 8.700 5c-2.700 3.700-5.600 4.900-8.700 4.900s-6-1.200-8.700-4.900z" fill="#fff" stroke="#3b82f6" stroke-width="1.300"/><circle cx="16.100" cy="15.300" r="3.700" fill="#3b82f6"/><circle cx="17" cy="13.400" r="1.100" fill="#eaf2ff"/></svg></div><div class="ab" style="left:1406px"><svg viewBox="0 0 32 32" style="left:-1px;top:-1px;width:32px;height:32px"><path d="M7.800 11.100h2v10.700h8.200v2H7.800z" fill="#2d3748"/><path d="M10.900 8.900h9v11.600h-9z" fill="#2d3748"/><path d="M15 15.900l7.900-7.900 1.500 1.500-7.900 7.900-2.100.6z" fill="#fff" stroke="#2d3748" stroke-width="1"/></svg></div><div class="ab" style="left:1446px"><svg viewBox="0 0 20 20" style="left:5px;top:5px;width:20px;height:20px" fill="#38a169"><path d="M13.890 3.390l2.710 2.720c.46.460.42 1.240.030 1.640l-8.010 8.020-5.560 1.160 1.160-5.580s7.600-7.630 7.990-8.030c.39-.39 1.220-.39 1.680.070zm-2.730 2.790l-5.590 5.610 1.110 1.110 5.540-5.650zm-2.970 8.230l5.580-5.600-1.070-1.080-5.590 5.600z"/></svg></div><div class="ab" style="left:1486px"><svg viewBox="0 0 20 20" style="left:5px;top:5px;width:20px;height:20px" fill="#dc2626"><path d="M12 4h3c.6 0 1 .4 1 1v1H3V5c0-.6.500-1 1-1h3c.2-1.100 1.300-2 2.500-2s2.300.9 2.500 2zM8 4h3c-.2-.6-.9-1-1.500-1S8.200 3.400 8 4zM4 7h11l-.9 10.100c0 .5-.5.900-1 .900H5.900c-.5 0-.9-.4-1-.9L4 7z"/></svg></div>
</div>
<div class="row" style="top:274px">
<div class="cb" style="left:15px;top:47px"></div>
<svg class="thumb" style="top:24px" viewBox="0 0 60 60"><defs><filter id="bl3" x="-5%" y="-5%" width="110%" height="110%"><feGaussianBlur stdDeviation=".6"/></filter><linearGradient id="w3" x1="0" y1="0" x2="1" y2="0"><stop offset="0" stop-color="#5e5b4e"/><stop offset=".12" stop-color="#8c8676"/><stop offset=".38" stop-color="#b9ad9d"/><stop offset=".58" stop-color="#9a8e7e"/><stop offset=".7" stop-color="#4a4238"/><stop offset=".74" stop-color="#7e766e"/><stop offset="1" stop-color="#8c827a"/></linearGradient></defs><rect width="60" height="60" fill="url(#w3)"/><g filter="url(#bl3)">
<rect x="11" y="3.500" width="3" height="6.500" fill="#d9a41c"/><rect x="11.500" y="10.500" width="2.500" height="3" fill="#b8ae9e"/>
<rect x="20" y="3.500" width="1.200" height="12" fill="#5a8ad8"/><rect x="22" y="3" width="4" height="5" fill="#4a7ad0"/><rect x="21" y="7" width="5" height="6" fill="#e8862c"/><rect x="22" y="12" width="3" height="4" fill="#8ad058"/>
<circle cx="32.800" cy="13.500" r="4.200" fill="#2438b0"/><circle cx="32.800" cy="14" r="2.200" fill="#c8203a"/>
<rect x="48.300" y="-1" width="1.800" height="4.500" fill="#5a6a8a"/></g></svg>
<div class="ttl" style="width:105px">Digital Art Expo</div><div class="pub" style="left:274.500px"><i></i>Published</div>
<div class="pid">ID: 320</div><div class="ev">Event</div>
<div class="loc"><svg viewBox="0 0 10 16" width="10" height="16"><line x1="5" y1="9" x2="5" y2="16" stroke="#6b8a9a" stroke-width="1.100"/><circle cx="5" cy="5.600" r="4.300" fill="#e8382e"/><circle cx="3.700" cy="4.200" r="1.200" fill="#f58a7e"/></svg><span>Zoom</span></div>
<div class="dt">January 1, 1970</div><div class="tm">08:00</div>
<div class="cd">120 days, 3 hours, 21<br>minutes remaining</div>
<div class="tk" style="top:28px"><span>Adult</span><b>30</b></div><div class="tk" style="top:56px"><span>Child</span><b>20</b></div>
<div class="cap">0/90</div><div class="bar"></div><div class="av">Available</div>
<div class="ab" style="left:1366px"><svg viewBox="0 0 32 32" style="left:-1px;top:-1px;width:32px;height:32px"><path d="M7.300 16.300C10 12.600 12.900 11.300 16 11.300s6 1.300 8.700 5c-2.700 3.700-5.600 4.900-8.700 4.900s-6-1.200-8.700-4.900z" fill="#fff" stroke="#3b82f6" stroke-width="1.300"/><circle cx="16.100" cy="15.300" r="3.700" fill="#3b82f6"/><circle cx="17" cy="13.400" r="1.100" fill="#eaf2ff"/></svg></div><div class="ab" style="left:1406px"><svg viewBox="0 0 32 32" style="left:-1px;top:-1px;width:32px;height:32px"><path d="M7.800 11.100h2v10.700h8.200v2H7.800z" fill="#2d3748"/><path d="M10.900 8.900h9v11.600h-9z" fill="#2d3748"/><path d="M15 15.900l7.900-7.900 1.500 1.500-7.900 7.900-2.100.6z" fill="#fff" stroke="#2d3748" stroke-width="1"/></svg></div><div class="ab" style="left:1446px"><svg viewBox="0 0 20 20" style="left:5px;top:5px;width:20px;height:20px" fill="#38a169"><path d="M13.890 3.390l2.710 2.720c.46.460.42 1.240.030 1.640l-8.010 8.020-5.560 1.160 1.160-5.580s7.600-7.630 7.990-8.030c.39-.39 1.220-.39 1.680.070zm-2.730 2.790l-5.590 5.610 1.110 1.110 5.540-5.650zm-2.970 8.230l5.580-5.600-1.070-1.080-5.590 5.600z"/></svg></div><div class="ab" style="left:1486px"><svg viewBox="0 0 20 20" style="left:5px;top:5px;width:20px;height:20px" fill="#dc2626"><path d="M12 4h3c.6 0 1 .4 1 1v1H3V5c0-.6.500-1 1-1h3c.2-1.100 1.300-2 2.500-2s2.300.9 2.500 2zM8 4h3c-.2-.6-.9-1-1.500-1S8.200 3.400 8 4zM4 7h11l-.9 10.100c0 .5-.5.900-1 .900H5.900c-.5 0-.9-.4-1-.9L4 7z"/></svg></div>
</div>
</div>


</body>
</html>
